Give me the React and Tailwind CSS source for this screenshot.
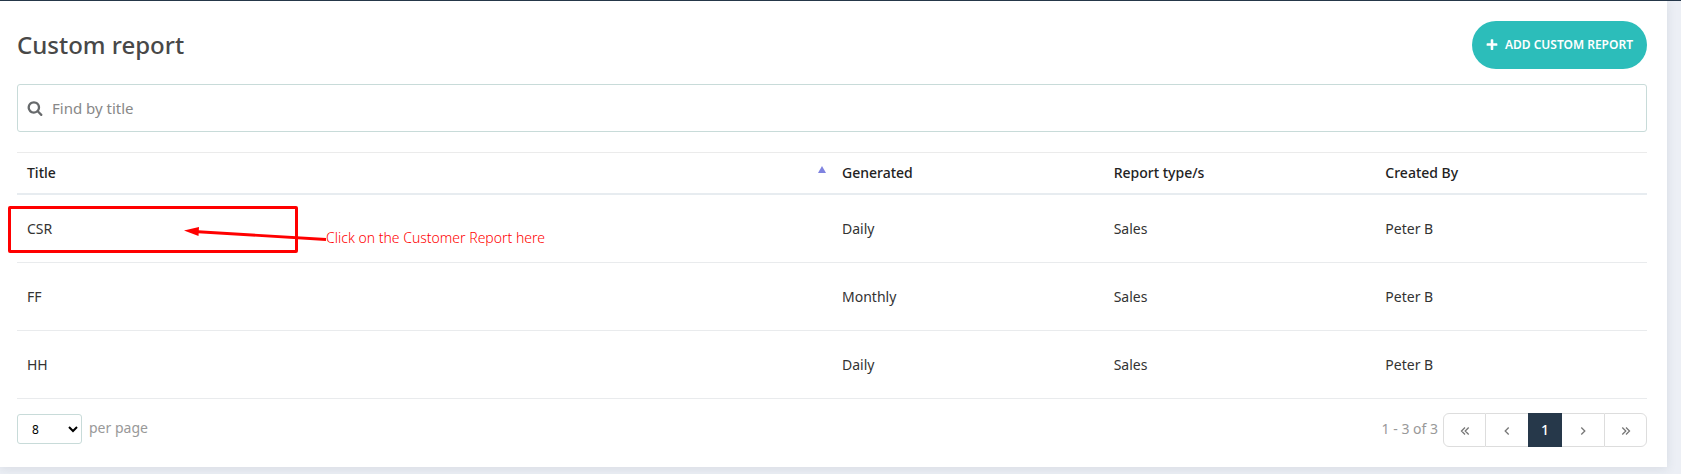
import React, { useState } from 'react'

const reports = [
  { title: 'CSR', generated: 'Daily', type: 'Sales', createdBy: 'Peter B' },
  { title: 'FF', generated: 'Monthly', type: 'Sales', createdBy: 'Peter B' },
  { title: 'HH', generated: 'Daily', type: 'Sales', createdBy: 'Peter B' },
]

const SearchIcon = () => (
  <svg viewBox="0 0 1792 1792" className="h-4 w-4 shrink-0" fill="#676a6c" aria-hidden="true">
    <path d="M1216 832q0-185-131.5-316.5t-316.5-131.5-316.5 131.5-131.5 316.5 131.5 316.5 316.5 131.5 316.5-131.5 131.5-316.5zm512 832q0 52-38 90t-90 38q-54 0-90-38l-343-342q-179 124-399 124-143 0-273.5-55.5t-225-150-150-225-55.5-273.5 55.5-273.5 150-225 225-150 273.5-55.5 273.5 55.5 225 150 150 225 55.5 273.5q0 220-124 399l343 343q37 37 37 90z" />
  </svg>
)

const PlusIcon = () => (
  <svg viewBox="0 0 1792 1792" className="h-3 w-3" fill="currentColor" aria-hidden="true">
    <path d="M1700 736v192q0 40-28 68t-68 28h-516v516q0 40-28 68t-68 28h-192q-40 0-68-28t-28-68v-516h-516q-40 0-68-28t-28-68v-192q0-40 28-68t68-28h516v-516q0-40 28-68t68-28h192q40 0 68 28t28 68v516h516q40 0 68 28t28 68z" />
  </svg>
)

// single or double angle used by the pager buttons
const Angle = ({ double, flip }) => (
  <svg viewBox="0 0 10 10" className={flip ? 'mx-auto mt-0.5 h-2.5 w-2.5 rotate-180' : 'mx-auto mt-0.5 h-2.5 w-2.5'} fill="none" stroke="#777" strokeWidth="1.3" aria-hidden="true">
    {double ? <path d="M5 1.500L1.500 5L5 8.500M8.700 1.500L5.200 5L8.700 8.500" /> : <path d="M6.700 1.500L3.200 5L6.700 8.500" />}
  </svg>
)

// red box, arrow and hint laid over the first row
const Hint = () => (
  <div className="pointer-events-none absolute top-[11px] -left-[9px] flex items-start text-[#ff0000]">
    <div className="h-[47px] w-[290px] rounded-xs border-3 border-[#ff0000]"></div>
    <svg className="absolute top-0 left-0 h-12 w-80" viewBox="0 0 320 48" aria-hidden="true">
      <path d="M186 25.500L318 33.500" stroke="#ff0000" strokeWidth="2.8" />
      <path d="M176 24.500L191 21L190.500 30Z" fill="#ff0000" />
    </svg>
    <span className="ml-7 pt-5 text-sm leading-6 font-light whitespace-nowrap">Click on the Customer Report here</span>
  </div>
)

const App = () => {
  const [search, setSearch] = useState('')
  const rows = reports.filter(r => r.title.toLowerCase().includes(search.toLowerCase()))

  return (
    <div className="border-t border-[#26384a] bg-[#eceff5] pr-3.5 pb-[7px] font-['Noto_Sans',sans-serif]">
      <div className="bg-white pt-5 pr-5 pb-5 pl-[17px] shadow-[0_2px_10px_rgba(40,60,80,0.1)]">
        <div className="flex items-center justify-between">
          <h1 className="text-2xl font-medium text-[#484848]">Custom report</h1>
          <button className="flex h-12 items-center gap-[7px] rounded-full bg-[#2cbdba] px-3.5 text-xs font-semibold text-white">
            <PlusIcon />
            ADD CUSTOM REPORT
          </button>
        </div>

        <label className="mt-[15px] flex h-12 items-center gap-[9px] rounded-[3px] border border-[#c8dbd9] px-[9px]">
          <SearchIcon />
          <input
            type="text"
            aria-label="Find by title"
            placeholder="Find by title"
            value={search}
            onChange={e => setSearch(e.target.value)}
            className="h-full w-full text-[15px] text-[#555] outline-none placeholder:text-[#888]"
          />
        </label>

        <table className="mt-5 w-full table-fixed border-separate border-spacing-0 border-t border-[#ebebeb] text-left text-sm text-[#333]">
          <thead>
            <tr className="h-[42px] text-[#222]">
              <th className="w-1/2 border-b-2 border-[#e7ecf0] pr-1.5 pl-2.5 font-medium">
                <div className="flex items-center justify-between">
                  Title
                  <svg viewBox="0 0 8 7" className="mb-2 h-[7px] w-2" aria-hidden="true">
                    <path d="M4 0L8 7H0Z" fill="#7f83e0" />
                  </svg>
                </div>
              </th>
              <th className="w-1/6 border-b-2 border-[#e7ecf0] px-2.5 font-medium">Generated</th>
              <th className="w-1/6 border-b-2 border-[#e7ecf0] px-2.5 font-medium">Report type/s</th>
              <th className="w-1/6 border-b-2 border-[#e7ecf0] px-2.5 font-medium">Created By</th>
            </tr>
          </thead>
          <tbody>
            {rows.map(item => (
              <tr key={item.title} className="h-17">
                <td className="relative border-b border-[#e9ebed] px-2.5">
                  {item.title}
                  {item.title === 'CSR' && <Hint />}
                </td>
                <td className="border-b border-[#e9ebed] px-2.5">{item.generated}</td>
                <td className="border-b border-[#e9ebed] px-2.5">{item.type}</td>
                <td className="border-b border-[#e9ebed] px-2.5">{item.createdBy}</td>
              </tr>
            ))}
          </tbody>
        </table>

        <div className="mt-3.5 flex items-center justify-between text-sm text-[#999]">
          <div className="flex items-center gap-[7px] pb-0.5">
            <select id="per-page" className="h-[30px] w-[65px] rounded-[3px] border border-[#c8dbd9] bg-white pl-2.5 text-xs text-black">
              <option>8</option>
              <option>16</option>
              <option>32</option>
            </select>
            <label htmlFor="per-page" className="pb-0.5">per page</label>
          </div>
          <div className="flex items-center gap-[5px]">
            <span className="pb-0.5">1 - 3 of 3</span>
            <nav className="flex h-[34px]">
              <button aria-label="First" className="w-[43px] rounded-l-md border border-[#ddd]"><Angle double /></button>
              <button aria-label="Previous" className="w-[42px] border-y border-[#ddd]"><Angle /></button>
              <button className="w-[34px] bg-[#26384a] font-medium text-white">1</button>
              <button aria-label="Next" className="w-[42px] border-y border-[#ddd]"><Angle flip /></button>
              <button aria-label="Last" className="w-[43px] rounded-r-md border border-[#ddd]"><Angle double flip /></button>
            </nav>
          </div>
        </div>
      </div>
    </div>
  )
}

export default App
